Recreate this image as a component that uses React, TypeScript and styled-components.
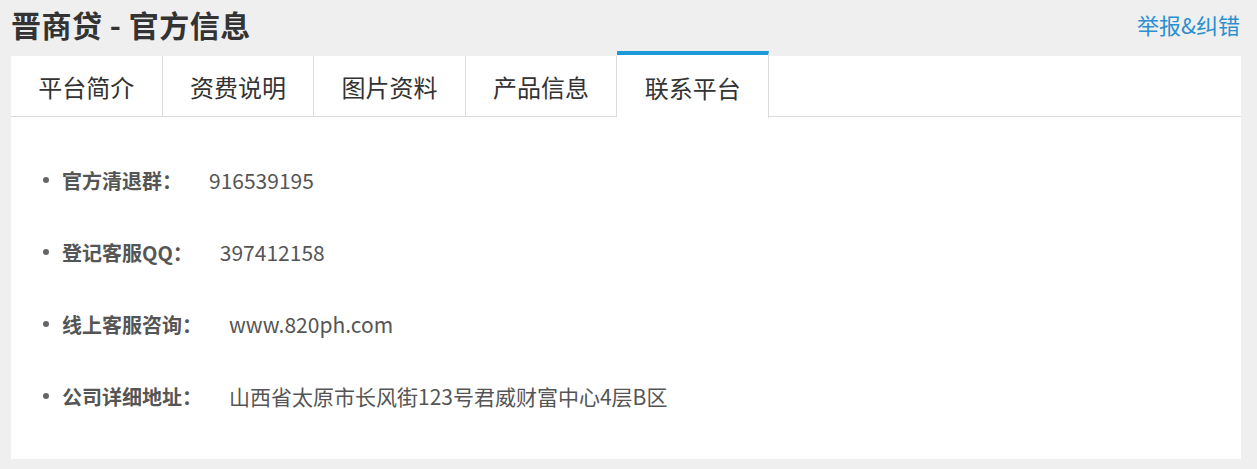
import styled, { createGlobalStyle } from "styled-components";

const GlobalStyle = createGlobalStyle`
  body {
    margin: 0;
    background: #efefef;
    font-family: "Noto Sans CJK SC", "Microsoft YaHei", sans-serif;
  }
`;

const Page = styled.div`
  padding: 0 16px 10px 11px;
`;

const Header = styled.header`
  height: 56px;
  display: flex;
  justify-content: space-between;
  align-items: center;
  padding-bottom: 9px;
  box-sizing: border-box;
`;

const Title = styled.h1`
  margin: 0;
  font-size: 30px;
  font-weight: 700;
  color: #333;
  letter-spacing: 0.5px;
`;

const ReportLink = styled.a`
  font-size: 22px;
  color: #2b8fd0;
  text-decoration: none;
  margin-right: 1px;
`;

const Panel = styled.section`
  background: #fff;
`;

const Tabs = styled.ul`
  display: flex;
  margin: 0;
  padding: 0;
  list-style: none;
  height: 60px;
  border-bottom: 1px solid #dcdcdc;
`;

const Tab = styled.li<{ $active?: boolean }>`
  width: 150.6px;
  display: flex;
  align-items: center;
  justify-content: center;
  font-size: 24px;
  color: #333;
  background: #fff;
  border-right: 1px solid #dcdcdc;
  box-sizing: content-box;
  ${(p) =>
    p.$active &&
    `
    margin-top: -5px;
    border-top: 4px solid #1b9ad8;
    height: 62px;
    padding-top: 1px;
  `}
`;

const InfoList = styled.ul`
  margin: 0;
  padding: 27px 0 27px 32px;
  list-style: none;
`;

const InfoRow = styled.li`
  height: 72px;
  display: flex;
  align-items: center;
  font-size: 20px;
  color: #555;

  &::before {
    content: "";
    flex-shrink: 0;
    width: 6px;
    height: 6px;
    border-radius: 50%;
    background: #666;
    margin-right: 13px;
  }
`;

const Label = styled.span`
  font-weight: 700;
  margin-right: 27px;
`;

const Value = styled.span`
  font-size: 21px;
  color: #555;
`;

const tabs = ["平台简介", "资费说明", "图片资料", "产品信息", "联系平台"];

const info = [
  { label: "官方清退群：", value: "916539195" },
  { label: "登记客服QQ：", value: "397412158" },
  { label: "线上客服咨询：", value: "www.820ph.com" },
  { label: "公司详细地址：", value: "山西省太原市长风街123号君威财富中心4层B区" },
];

export default function App() {
  return (
    <Page>
      <GlobalStyle />
      <Header>
        <Title>晋商贷 - 官方信息</Title>
        <ReportLink href="#">举报&amp;纠错</ReportLink>
      </Header>
      <Panel>
        <Tabs>
          {tabs.map((t, i) => (
            <Tab key={t} $active={i === 4}>
              {t}
            </Tab>
          ))}
        </Tabs>
        <InfoList>
          {info.map((row) => (
            <InfoRow key={row.label}>
              <Label>{row.label}</Label>
              <Value>{row.value}</Value>
            </InfoRow>
          ))}
        </InfoList>
      </Panel>
    </Page>
  );
}
